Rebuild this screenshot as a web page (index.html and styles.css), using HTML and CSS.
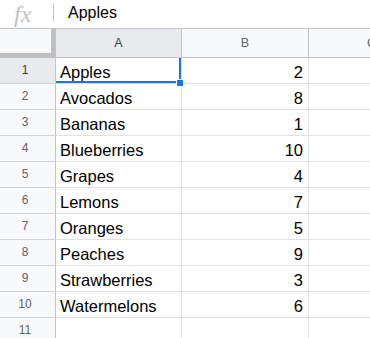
FILE: index.html
```html
<!DOCTYPE html>
<html lang="en">

<head>
    <meta charset="UTF-8">
    <title>Fruit sheet</title>
    <link rel="stylesheet" href="styles.css">
</head>

<body>
    <div class="formula-bar">
        <span class="fx">fx</span>
        <span class="divider"></span>
        <span class="formula-value">Apples</span>
    </div>

    <div class="sheet">
        <div class="row head-row">
            <div class="corner"></div>
            <div class="col-head selected">A</div>
            <div class="col-head">B</div>
            <div class="col-head">C</div>
        </div>

        <div class="row">
            <div class="row-head selected">1</div>
            <div class="cell active">Apples<span class="handle"></span></div>
            <div class="cell num">2</div>
            <div class="cell"></div>
        </div>
        <div class="row">
            <div class="row-head">2</div>
            <div class="cell">Avocados</div>
            <div class="cell num">8</div>
            <div class="cell"></div>
        </div>
        <div class="row">
            <div class="row-head">3</div>
            <div class="cell">Bananas</div>
            <div class="cell num">1</div>
            <div class="cell"></div>
        </div>
        <div class="row">
            <div class="row-head">4</div>
            <div class="cell">Blueberries</div>
            <div class="cell num">10</div>
            <div class="cell"></div>
        </div>
        <div class="row">
            <div class="row-head">5</div>
            <div class="cell">Grapes</div>
            <div class="cell num">4</div>
            <div class="cell"></div>
        </div>
        <div class="row">
            <div class="row-head">6</div>
            <div class="cell">Lemons</div>
            <div class="cell num">7</div>
            <div class="cell"></div>
        </div>
        <div class="row">
            <div class="row-head">7</div>
            <div class="cell">Oranges</div>
            <div class="cell num">5</div>
            <div class="cell"></div>
        </div>
        <div class="row">
            <div class="row-head">8</div>
            <div class="cell">Peaches</div>
            <div class="cell num">9</div>
            <div class="cell"></div>
        </div>
        <div class="row">
            <div class="row-head">9</div>
            <div class="cell">Strawberries</div>
            <div class="cell num">3</div>
            <div class="cell"></div>
        </div>
        <div class="row">
            <div class="row-head">10</div>
            <div class="cell">Watermelons</div>
            <div class="cell num">6</div>
            <div class="cell"></div>
        </div>
        <div class="row">
            <div class="row-head">11</div>
            <div class="cell"></div>
            <div class="cell"></div>
            <div class="cell"></div>
        </div>
    </div>
</body>

</html>
```

FILE: styles.css
```css
html,
body {
    margin: 0;
    padding: 0;
    width: 370px;
    height: 338px;
    overflow: hidden;
    background-color: #fff;
    font-family: "Liberation Sans", Arial, sans-serif;
}

* {
    box-sizing: border-box;
}

/* Barra de formula */

.formula-bar {
    height: 29px;
    display: flex;
    align-items: center;
    border-bottom: 1px solid #c4c4c4;
}

.fx {
    width: 53px;
    padding-left: 14px;
    font-family: "Liberation Serif", serif;
    font-style: italic;
    font-size: 24px;
    color: #c2c2c2;
    line-height: 26px;
}

.divider {
    width: 1px;
    height: 19px;
    background-color: #c8c8c8;
    margin-top: -3px;
}

.formula-value {
    padding-left: 14px;
    font-size: 16px;
    color: #000;
    margin-top: -3px;
}

/* Grade */

.sheet {
    width: 435px;
}

.row {
    display: grid;
    grid-template-columns: 56px 126px 127px 126px;
    height: 26px;
}

.head-row {
    height: 29px;
}

.corner {
    background-color: #f8f9fa;
    border-right: 5px solid #c0c0c0;
    border-bottom: 5px solid #c0c0c0;
}

.col-head {
    background-color: #f8f9fa;
    border-right: 1px solid #c4c4c4;
    border-bottom: 1px solid #c4c4c4;
    color: #5f6368;
    font-size: 12.5px;
    text-align: center;
    line-height: 28px;
}

.row-head {
    background-color: #f8f9fa;
    border-right: 1px solid #c4c4c4;
    border-bottom: 1px solid #d4d4d4;
    color: #5f6368;
    font-size: 12px;
    text-align: center;
    line-height: 25px;
    padding-right: 5px;
}

.selected {
    background-color: #e8eaed;
    color: #3c4043;
}

.cell {
    border-right: 1px solid #e2e2e2;
    border-bottom: 1px solid #e2e2e2;
    font-size: 16.5px;
    color: #000;
    line-height: 22px;
    padding: 3px 5px 0 4px;
    white-space: nowrap;
    overflow: hidden;
}

.num {
    text-align: right;
}

/* Celula selecionada */

.active {
    position: relative;
    overflow: visible;
}

.active::after {
    content: "";
    position: absolute;
    top: 0;
    left: 0;
    right: 0;
    bottom: 0;
    border-right: 2px solid #1a73e8;
    border-bottom: 2px solid #1a73e8;
}

.handle {
    position: absolute;
    right: -3px;
    bottom: -4px;
    width: 8px;
    height: 8px;
    background-color: #1a73e8;
    border: 1px solid #fff;
    z-index: 1;
}
```
